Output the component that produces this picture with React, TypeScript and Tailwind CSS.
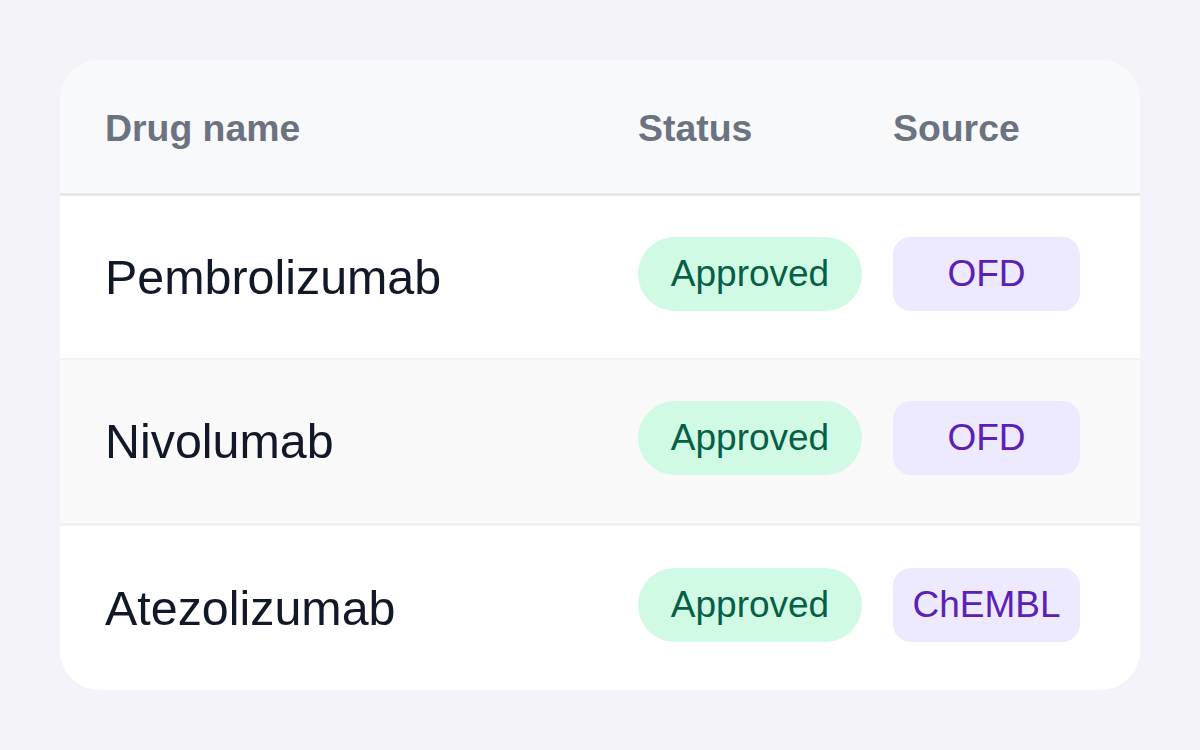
import React from "react";

const rows = [
  { name: "Pembrolizumab", status: "Approved", source: "OFD" },
  { name: "Nivolumab", status: "Approved", source: "OFD" },
  { name: "Atezolizumab", status: "Approved", source: "ChEMBL" },
];

const rowStyles = [
  "h-[164px] bg-white border-b-2 border-[#f0f1f3]",
  "h-[166px] bg-[#f9f9f9] border-b-[3px] border-[#f0f1f3]",
  "h-[164px] bg-white",
];

const App = () => {
  return (
    <div
      className="min-h-[750px] w-[1200px] bg-[#f4f3f9] p-[60px]"
      style={{ fontFamily: '"Liberation Sans", Arial, sans-serif' }}
    >
      <div className="w-[1080px] overflow-hidden rounded-[40px] bg-white">
        <div className="grid h-[136px] grid-cols-[533px_255px_187px] items-center border-b-[3px] border-[#e5e7eb] bg-[#f8f9fb] pl-[45px] pt-[4px] text-[37.4px] font-bold text-[#6b7280]">
          <div>Drug name</div>
          <div>Status</div>
          <div>Source</div>
        </div>
        {rows.map((row, i) => (
          <div
            key={row.name}
            className={
              "grid grid-cols-[533px_255px_187px] items-center pl-[45px] " +
              rowStyles[i]
            }
          >
            <div className="text-[48.4px] text-[#111827]">{row.name}</div>
            <div className="mb-[7px]">
              <span className="inline-flex h-[74px] w-[224px] items-center justify-center rounded-full bg-[#d1fae5] text-[37px] text-[#065f46]">
                {row.status}
              </span>
            </div>
            <div className="mb-[7px]">
              <span className="flex h-[74px] w-[187px] items-center justify-center rounded-[18px] bg-[#ede9fe] text-[37px] text-[#5b21b6]">
                {row.source}
              </span>
            </div>
          </div>
        ))}
      </div>
    </div>
  );
};

export default App;
